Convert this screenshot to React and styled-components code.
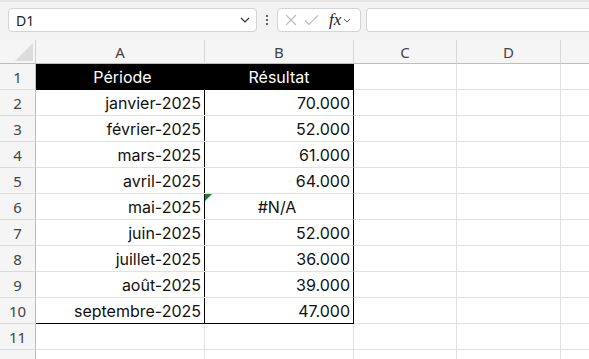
import React from 'react'
import styled, { createGlobalStyle } from 'styled-components'

const GlobalStyle = createGlobalStyle`
  html, body {
    margin: 0;
    padding: 0;
    background: #ffffff;
    overflow: hidden;
  }
`

const rows = [
    ['janvier-2025', '70.000'],
    ['février-2025', '52.000'],
    ['mars-2025', '61.000'],
    ['avril-2025', '64.000'],
    ['mai-2025', '#N/A'],
    ['juin-2025', '52.000'],
    ['juillet-2025', '36.000'],
    ['août-2025', '39.000'],
    ['septembre-2025', '47.000']
]

const columns = ['A', 'B', 'C', 'D', '']

function App() {
    return (
        <Page>
            <GlobalStyle/>
            <FormulaBar>
                <NameBox>
                    <span>D1</span>
                    <Chevron width="10" height="6" viewBox="0 0 10 6">
                        <path d="M1 1 L5 5 L9 1" fill="none" stroke="#333" strokeWidth="1.2"/>
                    </Chevron>
                </NameBox>
                <Kebab>
                    <i/><i/><i/>
                </Kebab>
                <FxButtons>
                    <svg width="12" height="12" viewBox="0 0 12 12">
                        <path d="M1 1 L11 11 M11 1 L1 11" stroke="#bdbdbd" strokeWidth="1.1"/>
                    </svg>
                    <svg width="15" height="12" viewBox="0 0 15 12">
                        <path d="M1 6.5 L5 10.5 L14 1.5" fill="none" stroke="#bdbdbd" strokeWidth="1.1"/>
                    </svg>
                    <FxLabel>fx</FxLabel>
                    <Chevron width="8" height="5" viewBox="0 0 8 5">
                        <path d="M1 1 L4 4 L7 1" fill="none" stroke="#555" strokeWidth="1"/>
                    </Chevron>
                </FxButtons>
                <FormulaInput/>
            </FormulaBar>
            <Grid>
                <Corner>
                    <svg width="18" height="18" viewBox="0 0 18 18">
                        <path d="M18 0 L18 18 L0 18 Z" fill="#dcdcdc"/>
                    </svg>
                </Corner>
                {columns.map((c, i) => (
                    <ColHeader key={i} $last={i === columns.length - 1}>{c}</ColHeader>
                ))}

                <RowHeader>1</RowHeader>
                <TitleCell>Période</TitleCell>
                <TitleCell $right>Résultat</TitleCell>
                <Cell/><Cell/><Cell $last/>

                {rows.map(([period, value], i) => (
                    <React.Fragment key={period}>
                        <RowHeader>{i + 2}</RowHeader>
                        <DataCell $bottom={i === rows.length - 1}>{period}</DataCell>
                        <DataCell $right $bottom={i === rows.length - 1} $center={value === '#N/A'}>
                            {value === '#N/A' && <ErrorFlag/>}
                            {value}
                        </DataCell>
                        <Cell/><Cell/><Cell $last/>
                    </React.Fragment>
                ))}

                {[11, 12].map(n => (
                    <React.Fragment key={n}>
                        <RowHeader>{n}</RowHeader>
                        <Cell/><Cell/><Cell/><Cell/><Cell $last/>
                    </React.Fragment>
                ))}
            </Grid>
        </Page>
    )
}

const Page = styled.div`
  width: 589px;
  height: 359px;
  overflow: hidden;
  background: #ffffff;
  font-family: "Inter", "Liberation Sans", sans-serif;
`

const FormulaBar = styled.div`
  height: 40px;
  box-sizing: border-box;
  padding: 8px 0 8px 8px;
  display: flex;
  align-items: stretch;
  background: #f3f3f3;
  border-top: 2px solid #e6e6e6;
`

const NameBox = styled.div`
  width: 249px;
  box-sizing: border-box;
  background: #ffffff;
  border: 1px solid #d4d4d4;
  border-radius: 4px;
  display: flex;
  align-items: center;
  justify-content: space-between;
  padding: 0 6px 0 7px;
  font-family: "Noto Sans", "Open Sans", sans-serif;
  font-size: 14px;
  color: #222;
  margin-top: -2px;
`

const Chevron = styled.svg`
  display: block;
`

const Kebab = styled.div`
  width: 20px;
  display: flex;
  flex-direction: column;
  align-items: center;
  justify-content: center;
  gap: 2px;
  margin-top: -2px;

  i {
    width: 2px;
    height: 2px;
    background: #333;
    border-radius: 1px;
  }
`

const FxButtons = styled.div`
  width: 84px;
  box-sizing: border-box;
  background: #ffffff;
  border: 1px solid #d4d4d4;
  border-radius: 4px;
  display: flex;
  align-items: center;
  gap: 7px;
  padding: 0 4px 0 7px;
  margin-top: -2px;
`

const FxLabel = styled.span`
  font-family: "Liberation Serif", serif;
  font-style: italic;
  font-size: 17px;
  color: #222;
  margin-left: 3px;
  margin-right: -5px;
`

const FormulaInput = styled.div`
  flex: 1;
  margin-left: 5px;
  margin-top: -2px;
  background: #ffffff;
  border: 1px solid #d4d4d4;
  border-right: none;
  border-radius: 4px 0 0 4px;
`

const Grid = styled.div`
  display: grid;
  grid-template-columns: 36px 169px 149px 103px 104px 1fr;
  grid-template-rows: 24px repeat(12, 26px);
`

const Corner = styled.div`
  background: #f5f5f5;
  border-right: 1px solid #d0d0d0;
  border-bottom: 1px solid #bdbdbd;
  display: flex;
  align-items: flex-end;
  justify-content: flex-end;
  padding: 0 2px 2px 0;
`

const ColHeader = styled.div`
  background: #f5f5f5;
  border-right: ${({ $last }) => ($last ? 'none' : '1px solid #d8d8d8')};
  border-bottom: 1px solid #bdbdbd;
  display: flex;
  align-items: center;
  justify-content: center;
  font-family: "Noto Sans", "Open Sans", sans-serif;
  font-size: 15px;
  color: #444;
`

const RowHeader = styled.div`
  background: #f5f5f5;
  border-right: 1px solid #bdbdbd;
  border-bottom: 1px solid #dadada;
  display: flex;
  align-items: center;
  justify-content: center;
  font-family: "Noto Sans", "Open Sans", sans-serif;
  font-size: 15px;
  color: #444;
`

const Cell = styled.div`
  border-right: ${({ $last }) => ($last ? 'none' : '1px solid #e1e1e1')};
  border-bottom: 1px solid #e1e1e1;
`

const TitleCell = styled.div`
  background: #000000;
  color: #ffffff;
  display: flex;
  align-items: center;
  justify-content: center;
  font-size: 16px;
  border-right: ${({ $right }) => ($right ? '1px solid #000' : 'none')};
  padding-left: ${({ $right }) => ($right ? '0' : '4px')};
`

const DataCell = styled.div`
  position: relative;
  display: flex;
  align-items: center;
  justify-content: ${({ $center }) => ($center ? 'center' : 'flex-end')};
  padding-right: 3px;
  font-size: 16px;
  color: #111;
  border-right: 1px solid #000;
  border-bottom: 1px solid ${({ $bottom }) => ($bottom ? '#000' : '#e1e1e1')};
  margin-left: ${({ $right }) => ($right ? '-1px' : '0')};
`

const ErrorFlag = styled.span`
  position: absolute;
  left: 1px;
  top: 0;
  width: 0;
  height: 0;
  border-top: 7px solid #1e7b34;
  border-right: 7px solid transparent;
`

export default App
